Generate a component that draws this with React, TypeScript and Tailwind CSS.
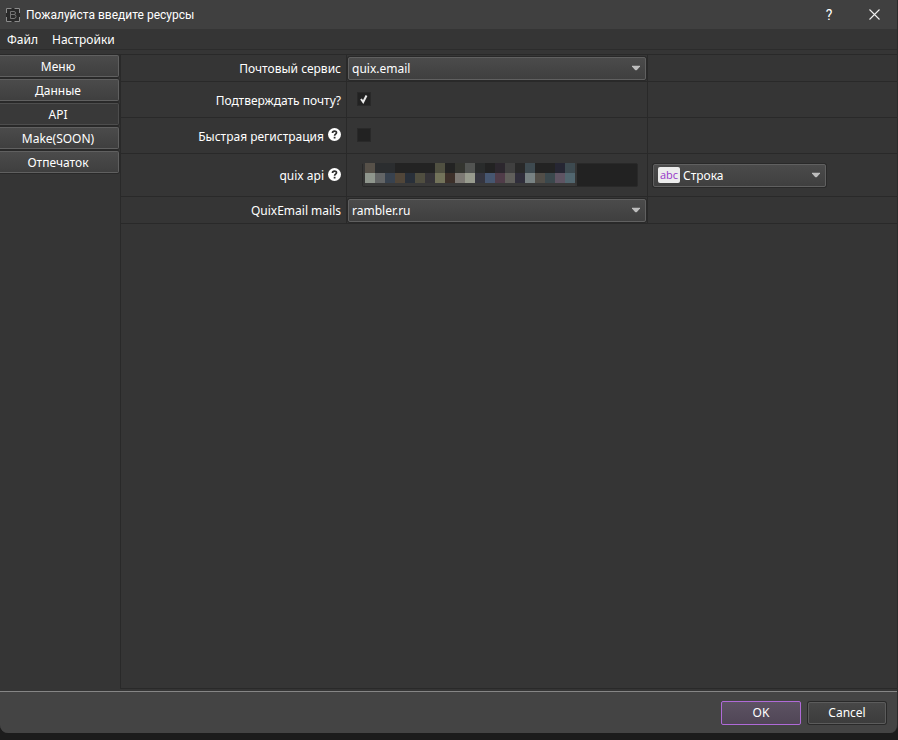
import { useState, type ReactNode } from 'react';

const NAV = ['Меню', 'Данные', 'API', 'Make(SOON)', 'Отпечаток'];

const MOSAIC_TOP = [
  '#575149', '#2b2d2f', '#2b2d2f', '#232323', '#232323', '#232323', '#232323', '#505041', '#232323', '#343530', '#525452',
  '#292b2b', '#222222', '#2c272e', '#404040', '#292929', '#3e4a50', '#232323', '#232323', '#262633', '#3d4a50',
];
const MOSAIC_BOTTOM = [
  '#8f968d', '#636566', '#38424f', '#514639', '#29303a', '#504e40', '#363438', '#73735a', '#3d302a', '#7d7974', '#989b8e',
  '#35353f', '#465670', '#503c49', '#605f5b', '#302e3b', '#788283', '#524e48', '#3b484d', '#5f5463', '#51666f',
];

function Arrow() {
  return (
    <svg className="pointer-events-none absolute top-1/2 right-1.5 -translate-y-1/2" width="8" height="5" viewBox="0 0 8 5" aria-hidden="true">
      <path d="M0 0H8V1L4.5 5H3.5L0 1Z" fill="#bdbdbd" />
    </svg>
  );
}

function Combo({ id, label, options, icon }: { id: string; label?: string; options: string[]; icon?: ReactNode }) {
  return (
    <div className="relative h-[23px] w-full">
      <select
        id={id}
        aria-label={label}
        className={`h-full w-full appearance-none rounded-xs border border-[#606060] bg-linear-to-b from-[#4b4b4b] to-[#3f3f3f] pt-0.5 pr-5 text-white shadow-[0_0_0_1px_#292929] outline-none ${icon ? 'pl-[29px]' : 'pl-[3px]'}`}
      >
        {options.map((o) => (
          <option key={o}>{o}</option>
        ))}
      </select>
      {icon}
      <Arrow />
    </div>
  );
}

function Help() {
  return (
    <svg width="13" height="13" viewBox="0 0 13 13" role="img" aria-label="Справка" className="-mt-0.5 shrink-0">
      <circle cx="6.5" cy="6.5" r="6.5" fill="#fff" />
      <path d="M4.5 5C4.5 2.5 8.5 2.5 8.5 4.8C8.5 6.1 6.6 6.2 6.6 7.7" fill="none" stroke="#303030" strokeWidth="1.7" />
      <path d="M5.7 8.8H7.5V10.5H5.7Z" fill="#303030" />
    </svg>
  );
}

function Row({ id, label, help, height, children, extra }: {
  id: string; label: string; help?: boolean; height: string; children: ReactNode; extra?: ReactNode;
}) {
  return (
    <div className={`grid grid-cols-[226px_301px_1fr] border-b border-[#292929] ${height}`}>
      <div className="flex items-center justify-end gap-1 border-r border-[#292929] pr-[5px]">
        <label htmlFor={id} className="pt-0.5">{label}</label>
        {help && <Help />}
      </div>
      <div className="flex items-center border-r border-[#292929] px-px">{children}</div>
      <div className="flex items-center pl-[5px]">{extra}</div>
    </div>
  );
}

function Check({ id, initial }: { id: string; initial: boolean }) {
  const [on, setOn] = useState(initial);
  return (
    <div className="relative mb-0.5 ml-[9px] size-3.5">
      <input
        id={id}
        type="checkbox"
        checked={on}
        onChange={() => setOn(!on)}
        className="block size-3.5 appearance-none border border-[#292929] bg-[#222222]"
      />
      {on && (
        <svg className="pointer-events-none absolute inset-0" width="14" height="14" viewBox="0 0 14 14" aria-hidden="true">
          <path d="M4 7L6.2 10L9.5 3.5" fill="none" stroke="#e8e8e8" strokeWidth="2" />
        </svg>
      )}
    </div>
  );
}

export default function App() {
  const [tab, setTab] = useState('API');
  return (
    <div className="flex min-h-screen flex-col bg-[#1c1c1c] font-['Noto_Sans','Open_Sans',sans-serif] text-xs text-white">
      <div className="flex grow flex-col overflow-hidden rounded-b-lg border-r border-[#2b2b2b] bg-[#353535]">
        <header className="flex h-[29px] items-center bg-[#404040] pr-4 pl-1.5 font-['Roboto','Open_Sans',sans-serif]">
          <svg width="14" height="14" viewBox="0 0 14 14" fill="none" stroke="#8c8c8c" aria-hidden="true">
            <rect width="14" height="14" fill="#292929" stroke="none" />
            <path d="M0.5 5V0.5H5.5M8.5 0.5H13.5V5M13.5 9V13.5H8.5M5.5 13.5H0.5V9" />
            <path d="M4.5 3.5H8Q9.5 3.5 9.5 5T8 6.5H4.5M8 6.5Q10 6.5 10 8.5T8 10.5H4.5V3.5" stroke="#747474" />
          </svg>
          <h1 className="ml-1.5 grow">Пожалуйста введите ресурсы</h1>
          <button type="button" aria-label="Справка" className="mr-[34px] w-3 text-sm">?</button>
          <button type="button" aria-label="Закрыть" className="mr-px">
            <svg width="11" height="11" viewBox="0 0 11 11" stroke="#f0f0f0" strokeWidth="1.1" aria-hidden="true">
              <path d="M0.5 0.5L10.5 10.5M10.5 0.5L0.5 10.5" />
            </svg>
          </button>
        </header>

        <nav className="flex h-[21px] items-center gap-3.5 border-b border-[#2c2c2c] pt-0.5 pl-[7px]">
          <button type="button">Файл</button>
          <button type="button">Настройки</button>
        </nav>

        <main className="flex grow pt-1 pb-0.5">
          <div className="flex w-[120px] shrink-0 flex-col gap-0.5 border-t border-[#292929] pr-px">
            {NAV.map((n) => (
              <button
                key={n}
                type="button"
                onClick={() => setTab(n)}
                className={`h-[22px] rounded-r-xs border border-l-0 pt-0.5 pr-0.5 shadow-[0_0_0_1px_#292929] ${n === tab ? 'border-[#4d4d4d] bg-[#393939]' : 'border-[#606060] bg-linear-to-b from-[#4b4b4b] to-[#3f3f3f]'}`}
              >
                {n}
              </button>
            ))}
          </div>

          <form className="min-w-0 grow border border-r-0 border-[#292929]">
            <Row id="service" label="Почтовый сервис" height="h-[27px]">
              <Combo id="service" options={['quix.email']} />
            </Row>
            <Row id="confirm" label="Подтверждать почту?" height="h-9">
              <Check id="confirm" initial />
            </Row>
            <Row id="fast" label="Быстрая регистрация" help height="h-9">
              <Check id="fast" initial={false} />
            </Row>
            <Row
              id="key"
              label="quix api"
              help
              height="h-[43px]"
              extra={
                <div className="w-[173px]">
                  <Combo
                    id="type"
                    label="Тип значения"
                    options={['Строка']}
                    icon={
                      <span className="pointer-events-none absolute top-[3px] left-[5px] h-4 w-[22px] rounded-xs bg-[#ececec] text-center font-['Open_Sans',sans-serif] text-[11px] leading-4 text-[#9636c8]">
                        abc
                      </span>
                    }
                  />
                </div>
              }
            >
              <div className="relative ml-3.5 w-[276px]">
                <input id="key" type="text" className="block h-6 w-full rounded-xs border border-[#292929] bg-[#222222] px-1 outline-none" />
                <div className="pointer-events-none absolute top-0 left-px grid h-[23px] grid-cols-[repeat(21,10px)] grid-rows-[10px_10px_3px] bg-[#353535] px-0.5" aria-hidden="true">
                  {[...MOSAIC_TOP, ...MOSAIC_BOTTOM].map((c, i) => (
                    <span key={i} style={{ backgroundColor: c }} />
                  ))}
                  <span className="col-span-21 bg-[#393939]" />
                </div>
              </div>
            </Row>
            <Row id="mails" label="QuixEmail mails" height="h-[27px]">
              <Combo id="mails" options={['rambler.ru']} />
            </Row>
          </form>
        </main>

        <footer className="flex h-[42px] items-center justify-end gap-[7px] border-t border-[#868686] bg-[#444444] pr-[11px]">
          <button type="button" className="h-6 w-20 rounded-xs border border-[#b06ad8] bg-linear-to-b from-[#5d5263] to-[#504656]">OK</button>
          <button type="button" className="h-[22px] w-[78px] rounded-xs border border-[#5c5c5c] bg-linear-to-b from-[#474747] to-[#3c3c3c] shadow-[0_0_0_1px_#292929]">Cancel</button>
        </footer>
      </div>
      <div className="h-[7px]" />
    </div>
  );
}
